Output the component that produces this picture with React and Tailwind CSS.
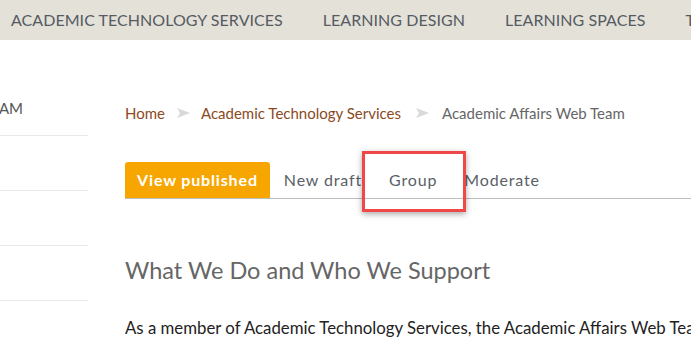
import React from "react";

const Arrow = ({ className }) => (
  <svg width="13" height="10" viewBox="0 0 13 10" className={"shrink-0 " + className}>
    <path d="M0 0 L13 5 L0 10 L3 5 Z" fill="#d9d9d9" />
  </svg>
);

export default function App() {
  return (
    <div className="w-[691px] h-[339px] overflow-hidden bg-white relative" style={{ fontFamily: "Lato, 'Open Sans', sans-serif" }}>
      <div className="h-[40px] bg-[#e4e1d8] flex items-center whitespace-nowrap pl-[11px] gap-[40px] text-[16px] tracking-[0.05px] text-[#555b63] overflow-hidden">
        <span className="shrink-0">ACADEMIC TECHNOLOGY SERVICES</span>
        <span className="shrink-0">LEARNING DESIGN</span>
        <span className="shrink-0">LEARNING SPACES</span>
        <span className="shrink-0">TEACHING</span>
      </div>
      <div className="flex">
        <div className="w-[88px] shrink-0 pt-[58px] overflow-hidden">
          <div className="h-[37px] w-[23px] flex items-start justify-end overflow-hidden whitespace-nowrap text-[15px] text-[#555] leading-[20px]">
            <span className="shrink-0">WEB TEAM</span>
          </div>
          <div className="h-[55px] border-t border-[#eaeaea]"></div>
          <div className="h-[55px] border-t border-[#eaeaea]"></div>
          <div className="h-[55px] border-t border-[#eaeaea]"></div>
          <div className="h-[55px] border-t border-[#eaeaea]"></div>
        </div>
        <div className="ml-[37px] flex-1 whitespace-nowrap">
          <div className="mt-[63px] flex items-center text-[15px] leading-[20px]">
            <span className="text-[#8b4a1e]">Home</span>
            <Arrow className="ml-[12px] mr-[11px]" />
            <span className="text-[#8b4a1e]">Academic Technology Services</span>
            <Arrow className="ml-[15px] mr-[13px]" />
            <span className="text-[#666]">Academic Affairs Web Team</span>
          </div>
          <div className="mt-[39px] flex border-b border-[#bdbdbd] text-[16px] tracking-[0.85px]">
            <span className="h-[36px] flex items-center px-[12px] bg-[#f7a600] text-white font-bold rounded-t-[3px]">View published</span>
            <span className="h-[36px] flex items-center px-[14px] text-[#5a5f66]">New draft</span>
            <span className="h-[36px] flex items-center px-[13px] text-[#5a5f66]">Group</span>
            <span className="h-[36px] flex items-center px-[14px] text-[#5a5f66]">Moderate</span>
          </div>
          <h2 className="mt-[56px] text-[23.5px] leading-[30px] text-[#666]">What We Do and Who We Support</h2>
          <p className="mt-[32px] text-[16.8px] leading-[22px] text-[#222]">As a member of Academic Technology Services, the Academic Affairs Web Team</p>
        </div>
      </div>
      <div className="absolute left-[362px] top-[151px] w-[104px] h-[61px] border-[3px] border-[#f04848] shadow-[0_2px_6px_rgba(0,0,0,0.35)]"></div>
    </div>
  );
}
